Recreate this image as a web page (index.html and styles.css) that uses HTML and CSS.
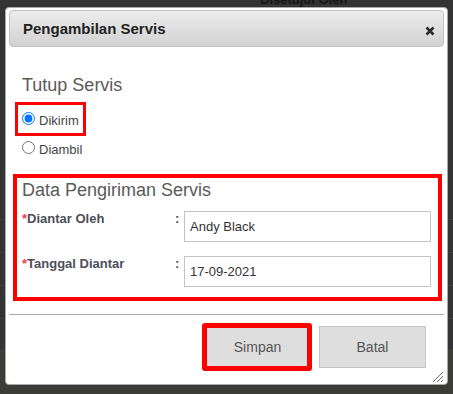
FILE: index.html
```html
<!DOCTYPE html>
<html lang="id">
<head>
<meta charset="UTF-8">
<meta name="viewport" content="width=device-width, initial-scale=1.0">
<title>Pengambilan Servis</title>
<link rel="stylesheet" href="styles.css">
</head>
<body>

<!-- page behind the modal overlay -->
<div class="page">
  <div class="page-title">Disetujui Oleh</div>
  <div class="page-rows">
    <div class="row"></div>
    <div class="row"></div>
    <div class="row"></div>
    <div class="row"></div>
    <div class="row"></div>
  </div>
</div>

<div class="dialog">
  <div class="titlebar">
    <span class="title">Pengambilan Servis</span>
    <svg class="close" width="10" height="10" viewBox="0 0 10 10">
      <path d="M1.5 1.5 L8.5 8.5 M8.5 1.5 L1.5 8.5" stroke="#2b2b2b" stroke-width="2.6" fill="none"/>
    </svg>
  </div>

  <div class="dialog-body">
    <h3 class="heading first">Tutup Servis</h3>

    <label class="choice marked">
      <input type="radio" name="tutup" checked>
      <span>Dikirim</span>
    </label>
    <label class="choice plain">
      <input type="radio" name="tutup">
      <span>Diambil</span>
    </label>

    <div class="section marked-box">
      <h3 class="heading">Data Pengiriman Servis</h3>
      <div class="field">
        <span class="field-label"><b class="req">*</b>Diantar Oleh</span>
        <span class="colon">:</span>
        <input type="text" class="field-input" value="Andy Black">
      </div>
      <div class="field">
        <span class="field-label"><b class="req">*</b>Tanggal Diantar</span>
        <span class="colon">:</span>
        <input type="text" class="field-input" value="17-09-2021">
      </div>
    </div>
  </div>

  <div class="buttonpane">
    <span class="btn-wrap marked-btn"><button class="btn">Simpan</button></span>
    <button class="btn">Batal</button>
  </div>

  <svg class="resize" width="12" height="12" viewBox="0 0 12 12">
    <path d="M11 1 L1 11 M11 5 L5 11 M11 9 L9 11" stroke="#6b6b6b" stroke-width="1" fill="none"/>
  </svg>
</div>

</body>
</html>
```

FILE: styles.css
```css
/* page + overlay */
body {
  margin: 0;
  height: 394px;
  overflow: hidden;
  background-color: #3c3c36;
  font-family: "Liberation Sans", Arial, sans-serif;
}

.page {
  height: 357px;
  background-color: #333;
}

.page-title {
  margin: -8px 0 0 260px;
  font-weight: bold;
  font-size: 13px;
  line-height: 15px;
  color: #171717;
}

.page-rows {
  padding-top: 180px;
}

.row {
  height: 32px;
  border-bottom: 1px solid #3e3e3e;
}

/* dialog */
.dialog {
  position: absolute;
  left: 5px;
  top: 7px;
  width: 443px;
  height: 378px;
  box-sizing: border-box;
  padding: 2px 3px 3px;
  background-color: #fff;
  border: 1px solid #a9a9a9;
  border-radius: 4px;
}

.titlebar {
  height: 37px;
  box-sizing: border-box;
  display: flex;
  justify-content: space-between;
  align-items: center;
  padding: 0 8px 0 13px;
  border: 1px solid #c2c2c2;
  border-radius: 4px;
  background: linear-gradient(#ececec, #d2d2d2);
}

.title {
  font-weight: bold;
  font-size: 15px;
  line-height: 18px;
  color: #222;
}

.close {
  margin-top: 4px;
}

.dialog-body {
  padding: 0 2px 0 4px;
}

.heading {
  margin: 0;
  font-weight: normal;
  font-size: 18px;
  line-height: 21px;
  color: #5a5a5a;
}

.heading.first {
  margin: 28px 0 0 9px;
}

.choice {
  display: flex;
  align-items: center;
  gap: 4px;
  width: fit-content;
  font-size: 13px;
  line-height: 16px;
  color: #444;
}

.choice input {
  width: 13px;
  height: 13px;
  margin: 0;
}

.choice span {
  margin-top: 5px;
}

.choice.marked {
  margin: 6px 0 0 2px;
  height: 27px;
  padding: 0 4px 1px 4px;
  border: 3px solid #ff0000;
}

.choice.plain {
  height: 22px;
  margin: 0 0 0 9px;
}

.section {
  margin-top: 16px;
  padding: 2px 7px 10px 5px;
}

.marked-box {
  border: 4px solid #ff0000;
}

.field {
  display: grid;
  grid-template-columns: 153px 9px 1fr;
  align-items: start;
  margin-top: 10px;
}

.field + .field {
  margin-top: 14px;
}

.field-label,
.colon {
  font-weight: bold;
  font-size: 13px;
  line-height: 16px;
  color: #4c4f58;
}

.req {
  color: #e8474f;
}

.field-input {
  height: 31px;
  box-sizing: border-box;
  margin: 0;
  padding: 0 5px;
  border: 1px solid #c4c4c4;
  font-family: "Liberation Sans", Arial, sans-serif;
  font-size: 13px;
  color: #333;
  outline: none;
}

/* buttons */
.buttonpane {
  display: flex;
  justify-content: flex-end;
  gap: 8px;
  margin-top: 13px;
  padding: 11px 18px 0 0;
  border-top: 1px solid #ababab;
}

.btn {
  width: 107px;
  height: 42px;
  border: 1px solid #c6c6c6;
  background-color: #dedede;
  font-family: "Liberation Sans", Arial, sans-serif;
  font-size: 14px;
  color: #555;
}

.btn-wrap {
  display: block;
  position: relative;
}

.marked-btn::after {
  content: "";
  position: absolute;
  left: -2px;
  right: -1px;
  top: -3px;
  bottom: -3px;
  border: 5px solid #ff0000;
  border-radius: 3px;
}

.resize {
  position: absolute;
  right: 3px;
  bottom: 1px;
}
```
